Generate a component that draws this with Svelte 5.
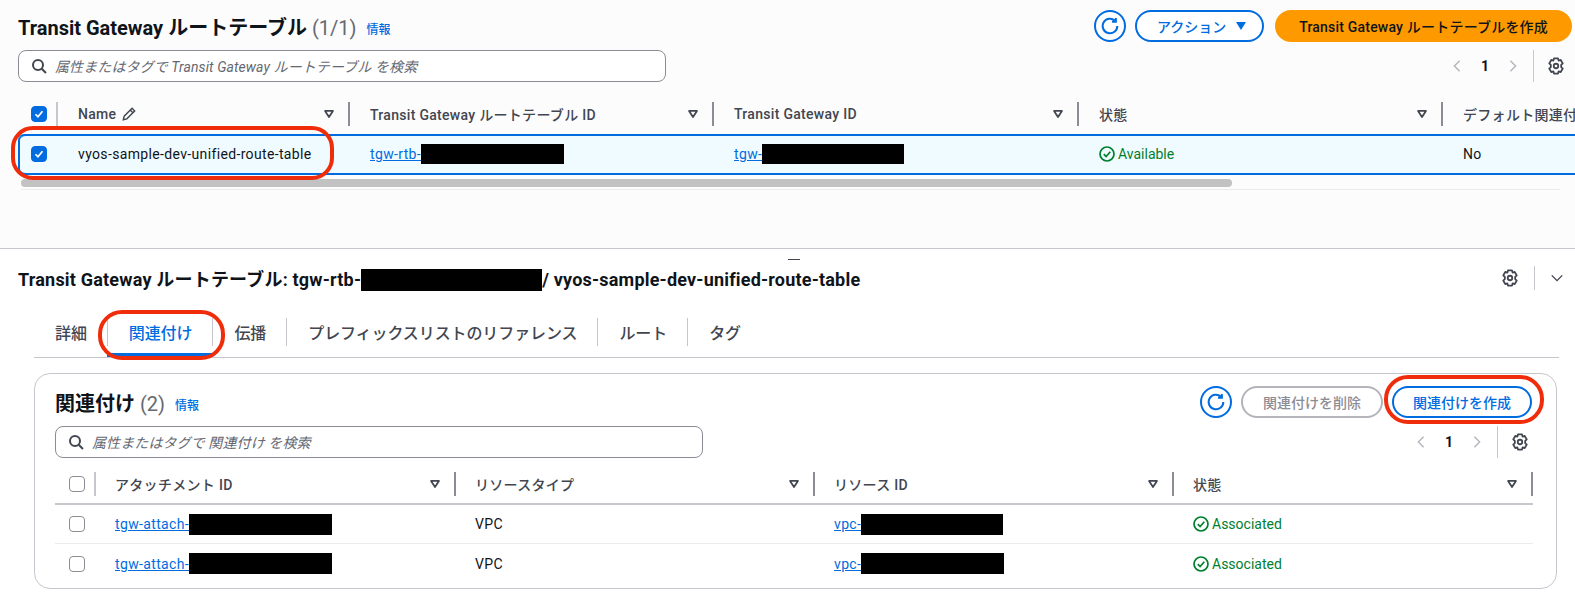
<script>
	const topCols = [
		{ label: 'Transit Gateway ルートテーブル ID' },
		{ label: 'Transit Gateway ID' },
		{ label: '状態' }
	];
	const attachments = [
		{ redact: 143, vpc: 142 },
		{ redact: 143, vpc: 143 }
	];
	const tabs = ['詳細', '関連付け', '伝播', 'プレフィックスリストのリファレンス', 'ルート', 'タグ'];
</script>

{#snippet caret()}
	<svg class="caret" viewBox="0 0 16 16"><path d="M3.5 4.5h9L8 11.5z" /></svg>
{/snippet}
{#snippet gear()}
	<svg class="gear" viewBox="0 0 16 16">
		<path d="M6.2 1.2h3.6l.5 2 1.9-.6 1.8 3.1-1.4 1.4v1.8l1.4 1.4-1.8 3.1-1.9-.6-.5 2H6.2l-.5-2-1.9.6L2 10.3l1.4-1.4V7.1L2 5.7l1.8-3.1 1.9.6z" />
		<circle cx="8" cy="8" r="2" />
	</svg>
{/snippet}
{#snippet refresh()}
	<button class="round">
		<svg viewBox="0 0 16 16"><path d="M14.5 8a6.5 6.5 0 1 1-2.2-4.9M13.2.8v3.4H9.8" /></svg>
	</button>
{/snippet}
{#snippet searchIcon()}
	<svg class="search-icon" viewBox="0 0 16 16"><circle cx="7" cy="7" r="5" /><path d="M10.7 10.7 15 15" /></svg>
{/snippet}
{#snippet pager()}
	<div class="pager">
		<svg class="chev" viewBox="0 0 16 16"><path d="M11 2 5 8l6 6" /></svg>
		<span class="page-no">1</span>
		<svg class="chev" viewBox="0 0 16 16"><path d="m5 2 6 6-6 6" /></svg>
		<span class="pager-sep"></span>
		{@render gear()}
	</div>
{/snippet}
{#snippet ok(text)}
	<span class="status">
		<svg viewBox="0 0 16 16"><circle cx="8" cy="8" r="7" /><path d="m4.8 8.2 2.3 2.3 4.2-4.8" /></svg>{text}
	</span>
{/snippet}
{#snippet checked()}
	<span class="cb on"><svg viewBox="0 0 16 16"><path d="m4 8.3 2.8 2.9L12 4.8" /></svg></span>
{/snippet}

<div class="page">
	<section class="upper">
		<header class="head">
			<h1>Transit Gateway ルートテーブル <span class="count">(1/1)</span> <a class="info">情報</a></h1>
			<div class="actions">
				{@render refresh()}
				<button class="pill menu">アクション <i class="tri"></i></button>
				<button class="pill primary">Transit Gateway ルートテーブルを作成</button>
			</div>
		</header>

		<div class="toolbar">
			<div class="search wide-top">
				{@render searchIcon()}
				<span>属性またはタグで Transit Gateway ルートテーブル を検索</span>
			</div>
			{@render pager()}
		</div>

		<div class="grid top-grid thead">
			<div class="th cb-cell">{@render checked()}</div>
			<div class="th"><span>Name <svg class="pencil" viewBox="0 0 16 16"><path d="m11.5 1.5 3 3L5.5 13.5 1.5 14.5l1-4zM9.5 3.5l3 3" /></svg></span>{@render caret()}</div>
			{#each topCols as col}
				<div class="th"><span>{col.label}</span>{@render caret()}</div>
			{/each}
			<div class="th last"><span>デフォルト関連付け</span></div>
		</div>
		<div class="grid top-grid selected">
			<div class="td cb-cell">{@render checked()}</div>
			<div class="td">vyos-sample-dev-unified-route-table</div>
			<div class="td"><a class="link">tgw-rtb-</a><i class="mask m-rtb"></i></div>
			<div class="td"><a class="link">tgw-</a><i class="mask m-tgw"></i></div>
			<div class="td">{@render ok('Available')}</div>
			<div class="td">No</div>
		</div>
		<div class="scroll"><div class="thumb"></div></div>
	</section>

	<section class="lower">
		<i class="handle"></i>
		<div class="detail-head">
			<h2>Transit Gateway ルートテーブル: tgw-rtb-<i class="mask m-title"></i>/ vyos-sample-dev-unified-route-table</h2>
			<div class="detail-tools">
				{@render gear()}
				<span class="pager-sep"></span>
				<svg class="chev dark" viewBox="0 0 16 16"><path d="m2 5 6 6 6-6" /></svg>
			</div>
		</div>

		<nav class="tabs">
			{#each tabs as tab, i}
				<div class="tab" class:active={i === 1}><span>{tab}</span></div>
			{/each}
		</nav>

		<div class="card">
			<div class="card-head">
				<h3>関連付け <span class="count">(2)</span> <a class="info">情報</a></h3>
				<div class="actions small-gap">
					{@render refresh()}
					<button class="pill disabled">関連付けを削除</button>
					<button class="pill create">関連付けを作成</button>
				</div>
			</div>
			<div class="toolbar inner">
				<div class="search">
					{@render searchIcon()}
					<span>属性またはタグで 関連付け を検索</span>
				</div>
				{@render pager()}
			</div>

			<div class="grid card-grid thead">
				<div class="th cb-cell"><span class="cb"></span></div>
				<div class="th"><span>アタッチメント ID</span>{@render caret()}</div>
				<div class="th"><span>リソースタイプ</span>{@render caret()}</div>
				<div class="th"><span>リソース ID</span>{@render caret()}</div>
				<div class="th"><span>状態</span>{@render caret()}</div>
			</div>
			{#each attachments as row}
				<div class="grid card-grid trow">
					<div class="td cb-cell"><span class="cb"></span></div>
					<div class="td"><a class="link">tgw-attach-</a><i class="mask" style="width: {row.redact}px"></i></div>
					<div class="td">VPC</div>
					<div class="td"><a class="link">vpc-</a><i class="mask" style="width: {row.vpc}px"></i></div>
					<div class="td">{@render ok('Associated')}</div>
				</div>
			{/each}
		</div>
	</section>

	<!-- hand drawn highlights on top of the screenshot -->
	<i class="mark mark-row"></i>
	<i class="mark mark-tab"></i>
	<i class="mark mark-btn"></i>
</div>

<style>
	:global(body) {
		margin: 0;
		background: #fff;
	}
	.page {
		position: relative;
		width: 1575px;
		height: 601px;
		overflow: hidden;
		font-family: Roboto, "Noto Sans CJK JP", sans-serif;
		font-size: 14px;
		color: #0f141a;
	}
	h1, h2, h3 {
		margin: 0;
		font-weight: 700;
	}
	a.info {
		font-size: 12px;
		font-weight: 500;
		color: #006ce0;
		margin-left: 5px;
		vertical-align: 1px;
	}
	.count {
		font-weight: 400;
		color: #656871;
	}

	/* upper pane */
	.upper {
		height: 249px;
		box-sizing: border-box;
		padding-top: 10px;
		background: #fcfcfc;
		border-bottom: 1px solid #c6c6cd;
	}
	.head {
		display: flex;
		align-items: center;
		justify-content: space-between;
		height: 32px;
		padding: 0 3px 0 18px;
	}
	h1 {
		font-size: 20px;
	}
	.actions {
		display: flex;
		align-items: center;
		gap: 9px;
	}
	.small-gap {
		gap: 9px;
	}
	.round {
		width: 32px;
		height: 32px;
		padding: 0;
		display: flex;
		align-items: center;
		justify-content: center;
		border: 2px solid #006ce0;
		border-radius: 50%;
		background: #fff;
	}
	.round svg {
		width: 18px;
		height: 18px;
		fill: none;
		stroke: #006ce0;
		stroke-width: 1.8;
	}
	.pill {
		height: 32px;
		box-sizing: border-box;
		padding: 0 19px;
		display: flex;
		align-items: center;
		gap: 10px;
		font: 500 14px Roboto, "Noto Sans CJK JP", sans-serif;
		color: #006ce0;
		border: 2px solid #006ce0;
		border-radius: 16px;
		background: #fff;
		white-space: nowrap;
	}
	.menu {
		padding: 0 16px 0 20px;
	}
	.tri {
		width: 0;
		height: 0;
		border: 5px solid transparent;
		border-top: 8px solid #006ce0;
		border-bottom: 0;
	}
	.primary {
		margin-left: 2px;
		padding: 0 22px;
		letter-spacing: .2px;
		background: #ff9900;
		border-color: #ff9900;
		color: #0f141a;
	}
	.disabled {
		padding: 0 20px;
		border-color: #b4b4bb;
		color: #8c8c94;
	}

	.toolbar {
		display: flex;
		align-items: center;
		justify-content: space-between;
		height: 32px;
		margin-top: 8px;
		padding: 0 10px 0 18px;
	}
	.search {
		display: flex;
		align-items: center;
		gap: 8px;
		width: 648px;
		height: 32px;
		box-sizing: border-box;
		padding-left: 12px;
		border: 1px solid #8c8c94;
		border-radius: 8px;
		background: #fff;
		font-style: italic;
		letter-spacing: .1px;
		color: #656871;
	}
	.search-icon {
		width: 16px;
		height: 16px;
		fill: none;
		stroke: #424650;
		stroke-width: 2;
	}
	.pager {
		display: flex;
		align-items: center;
		height: 32px;
	}
	.chev {
		width: 14px;
		height: 14px;
		fill: none;
		stroke: #b4b4bb;
		stroke-width: 1.6;
	}
	.chev.dark {
		stroke: #424650;
	}
	.page-no {
		width: 42px;
		text-align: center;
		font-weight: 700;
	}
	.pager-sep {
		width: 1px;
		height: 32px;
		margin: 0 13px 0 13px;
		background: #c6c6cd;
	}
	.gear {
		width: 18px;
		height: 18px;
		fill: none;
		stroke: #424650;
		stroke-width: 1.6;
		stroke-linejoin: round;
	}

	/* tables */
	.grid {
		display: grid;
		align-items: center;
	}
	.top-grid {
		grid-template-columns: 40px 292px 364px 365px 364px 220px;
		margin-left: 18px;
		width: 1557px;
	}
	.card-grid {
		grid-template-columns: 41px 360px 359px 359px 359px;
	}
	.thead {
		color: #424650;
		font-weight: 500;
	}
	.upper .thead {
		margin-top: 18px;
		height: 34px;
		box-sizing: border-box;
		align-items: start;
		padding-top: 2px;
	}
	.th {
		display: flex;
		align-items: center;
		justify-content: space-between;
		height: 24px;
		box-sizing: border-box;
		padding: 0 12px 0 20px;
		border-right: 2px solid #8c8c94;
		letter-spacing: .3px;
		white-space: nowrap;
	}
	.th.last {
		border-right: 0;
	}
	.th.cb-cell {
		padding: 0 0 0 13px;
		border-right: 2px solid #c6c6cd;
	}
	.caret {
		width: 14px;
		height: 14px;
		fill: none;
		stroke: #424650;
		stroke-width: 2;
		stroke-linejoin: round;
	}
	.pencil {
		width: 14px;
		height: 14px;
		margin-left: 2px;
		vertical-align: -2px;
		fill: none;
		stroke: #424650;
		stroke-width: 1.6;
	}
	.cb {
		display: flex;
		width: 16px;
		height: 16px;
		box-sizing: border-box;
		border: 1px solid #8c8c94;
		border-radius: 4px;
		background: #fff;
	}
	.cb.on {
		background: #006ce0;
		border-color: #006ce0;
	}
	.cb svg {
		width: 14px;
		height: 14px;
		fill: none;
		stroke: #fff;
		stroke-width: 2;
	}
	.td {
		display: flex;
		align-items: center;
		padding-left: 20px;
		letter-spacing: .35px;
		white-space: nowrap;
	}
	.td.cb-cell {
		padding-left: 13px;
	}
	.selected {
		height: 41px;
		box-sizing: border-box;
		padding-bottom: 1px;
		border-top: 2px solid #006ce0;
		border-bottom: 2px solid #006ce0;
		background: #f0fbff;
		border-top-left-radius: 6px;
		border-bottom-left-radius: 6px;
		box-shadow: inset 2px 0 0 #006ce0;
	}
	.link {
		color: #006ce0;
		text-decoration: underline;
	}
	.mask {
		display: inline-block;
		width: 141px;
		height: 21px;
		background: #000;
		flex: none;
	}
	.m-rtb {
		width: 143px;
		height: 20px;
	}
	.m-tgw {
		width: 142px;
		height: 20px;
	}
	.m-title {
		width: 181px;
		height: 22px;
		vertical-align: -5px;
	}
	.status {
		display: flex;
		align-items: center;
		gap: 3px;
		letter-spacing: 0;
		color: #00802f;
	}
	.status svg {
		width: 16px;
		height: 16px;
		fill: none;
		stroke: #00802f;
		stroke-width: 1.7;
	}
	.scroll {
		margin: 4px 0 0 21px;
		width: 1539px;
		padding-bottom: 2px;
		border-bottom: 1px solid #e9ebed;
	}
	.thumb {
		width: 1211px;
		height: 8px;
		border-radius: 4px;
		background: #c2c2c2;
	}

	/* lower pane */
	.lower {
		position: relative;
		height: 351px;
	}
	.handle {
		position: absolute;
		left: 788px;
		top: 10px;
		width: 12px;
		height: 1px;
		background: #424650;
	}
	.detail-head {
		display: flex;
		align-items: center;
		justify-content: space-between;
		height: 24px;
		padding: 17px 11px 0 18px;
	}
	h2 {
		font-size: 18px;
		letter-spacing: .2px;
		white-space: nowrap;
	}
	.detail-tools {
		display: flex;
		align-items: center;
	}
	.detail-tools .pager-sep {
		height: 24px;
		margin: 0 15px;
	}
	.tabs {
		display: flex;
		align-items: flex-end;
		height: 49px;
		margin: 18px 16px 0 34px;
		border-bottom: 1px solid #c6c6cd;
	}
	.tab {
		display: flex;
		align-items: center;
		height: 44px;
		padding-bottom: 7px;
		box-sizing: border-box;
		font-size: 16px;
		font-weight: 500;
		letter-spacing: -.1px;
		color: #424650;
	}
	.tab span {
		display: flex;
		align-items: center;
		height: 28px;
		padding: 0 20px 0 21px;
		border-left: 1px solid #c6c6cd;
	}
	.tab:first-child span {
		border-left: 0;
	}
	.tab.active {
		color: #006ce0;
		border-bottom: 4px solid #006ce0;
		padding-bottom: 3px;
	}
	.tab.active span {
		border-right: 1px solid #c6c6cd;
	}
	.tab.active + .tab span {
		border-left: 0;
	}
	.card {
		margin: 15px 18px 0 34px;
		height: 216px;
		box-sizing: border-box;
		padding: 12px 0 0 20px;
		border: 1px solid #c6c6cd;
		border-radius: 16px;
	}
	.card-head {
		display: flex;
		align-items: center;
		justify-content: space-between;
		height: 32px;
		padding-right: 24px;
	}
	h3 {
		font-size: 20px;
	}
	.toolbar.inner {
		padding: 0 27px 0 0;
	}
	.card .thead {
		height: 40px;
		margin-top: 7px;
		border-bottom: 2px solid #c6c6cd;
		width: 1478px;
		box-sizing: border-box;
	}
	.card .th {
		padding-left: 19px;
	}
	.card .th.cb-cell {
		padding-left: 14px;
	}
	.trow {
		height: 39px;
		width: 1478px;
		border-bottom: 1px solid #e9ebed;
		box-sizing: border-box;
	}
	.trow .td {
		padding-left: 19px;
	}
	.trow .td.cb-cell {
		padding-left: 14px;
	}
	.trow:last-child {
		border-bottom: 0;
	}

	/* red marks */
	.mark {
		position: absolute;
		box-sizing: border-box;
		border: 4px solid #f02d0a;
		pointer-events: none;
	}
	.mark-row {
		left: 11px;
		top: 126px;
		width: 323px;
		height: 54px;
		border-radius: 22px;
	}
	.mark-tab {
		left: 98px;
		top: 310px;
		width: 127px;
		height: 50px;
		border-radius: 24px;
	}
	.mark-btn {
		left: 1384px;
		top: 375px;
		width: 160px;
		height: 49px;
		border-radius: 24px;
	}
</style>
